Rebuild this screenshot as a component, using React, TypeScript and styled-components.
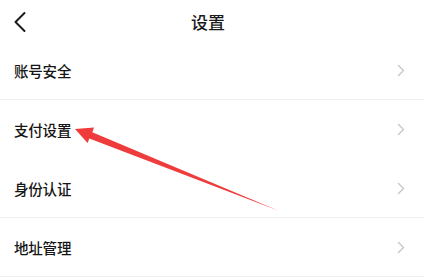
import styled, { createGlobalStyle } from 'styled-components';

const GlobalStyle = createGlobalStyle`
  html, body {
    margin: 0;
    padding: 0;
    background: #ffffff;
  }
  body {
    font-family: "Noto Sans CJK SC", "Noto Sans", sans-serif;
    color: #151515;
  }
`;

// settings entries, grouped: a divider follows the last item of each group
const ITEMS = [
  { label: '账号安全', divider: true },
  { label: '支付设置', divider: false },
  { label: '身份认证', divider: true },
  { label: '地址管理', divider: true },
];

const App = () => {
  return (
    <>
      <GlobalStyle />
      <Page>
        <Header>
          <BackButton aria-label="返回">
            <svg width="14" height="22" viewBox="0 0 14 22">
              <path
                d="M11.5 2 L2.5 11 L11.5 20"
                fill="none"
                stroke="#1a1a1a"
                strokeWidth="2"
                strokeLinecap="round"
                strokeLinejoin="round"
              />
            </svg>
          </BackButton>
          <Title>设置</Title>
        </Header>
        <List>
          {ITEMS.map((item) => (
            <Row key={item.label} $divider={item.divider}>
              <Label>{item.label}</Label>
              <svg width="8" height="13" viewBox="0 0 8 13">
                <path
                  d="M1.5 1.5 L6.5 6.5 L1.5 11.5"
                  fill="none"
                  stroke="#c4c4c4"
                  strokeWidth="1.3"
                  strokeLinecap="round"
                  strokeLinejoin="round"
                />
              </svg>
            </Row>
          ))}
        </List>
        <Annotation viewBox="0 0 424 277" width="424" height="277">
          <polygon
            points="75,129 94,127.6 92.3,132.2 278,210.5 89.3,138.4 87.6,143"
            fill="#ef3b3b"
          />
        </Annotation>
      </Page>
    </>
  );
};

export default App;

const Page = styled.div`
  position: relative;
  width: 424px;
  height: 277px;
  overflow: hidden;
  background: #ffffff;
`;

const Header = styled.div`
  position: relative;
  height: 41px;
  display: flex;
  align-items: center;
  justify-content: center;
`;

const BackButton = styled.div`
  position: absolute;
  left: 13px;
  top: 11px;
  display: flex;
`;

const Title = styled.div`
  font-size: 17px;
  font-weight: 500;
  color: #1a1a1a;
  margin-right: 8px;
  margin-top: 2px;
`;

const List = styled.div`
  display: flex;
  flex-direction: column;
`;

const Row = styled.div<{ $divider: boolean }>`
  height: 58px;
  display: flex;
  align-items: center;
  justify-content: space-between;
  padding: 0 19px 0 14px;
  border-bottom: 1px solid ${(p) => (p.$divider ? '#efefef' : 'transparent')};
`;

const Label = styled.span`
  font-size: 14.5px;
  font-weight: 500;
  color: #151515;
  letter-spacing: -0.2px;
`;

const Annotation = styled.svg`
  position: absolute;
  left: 0;
  top: 0;
  pointer-events: none;
`;
